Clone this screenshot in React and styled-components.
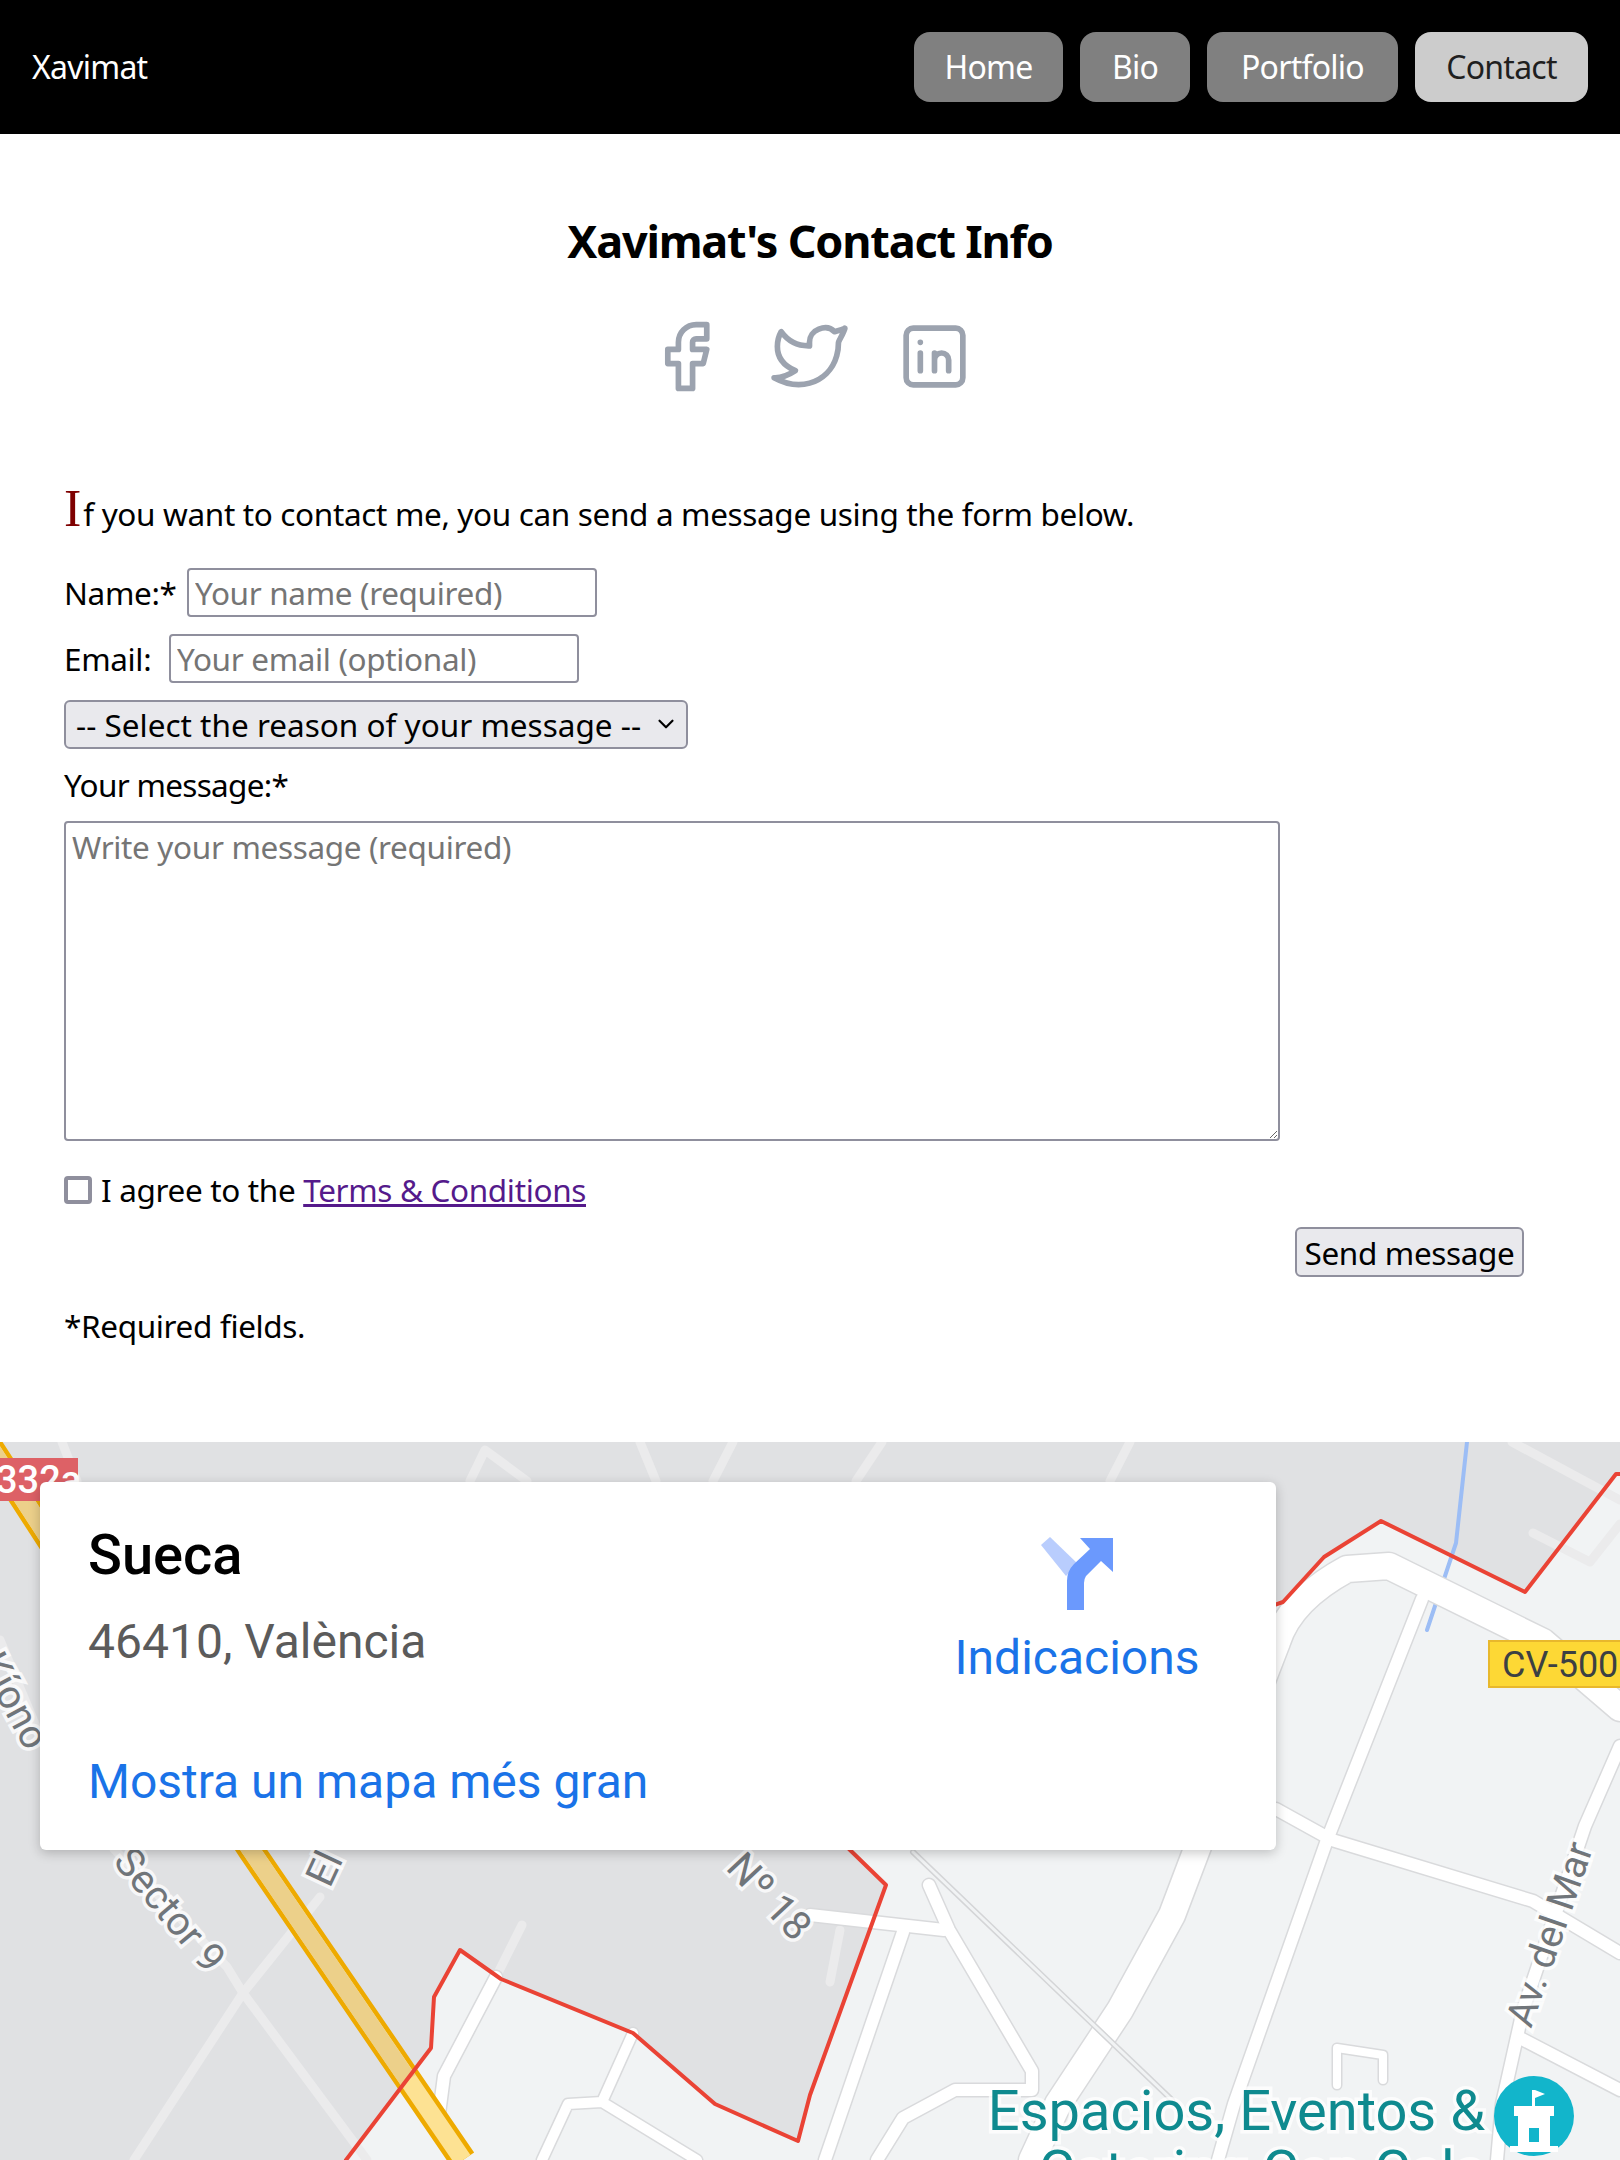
import React from "react";
import styled, { createGlobalStyle } from "styled-components";
import { TbBrandFacebook, TbBrandTwitter } from "react-icons/tb";
import { ChevronDown } from "lucide-react";

const GlobalStyle = createGlobalStyle`
  html, body {
    margin: 0;
    background: #fff;
  }
  body {
    font-family: "Noto Sans", "Open Sans", sans-serif;
    font-size: 31.5px;
    letter-spacing: -0.35px;
    color: #000;
  }
`;

const NavBar = styled.nav`
  display: flex;
  align-items: center;
  justify-content: space-between;
  height: 134px;
  padding: 0 32px;
  background: #000;
  font-size: 32px;
  letter-spacing: -0.75px;
`;

const Brand = styled.a`
  color: #fff;
  padding-bottom: 2px;
`;

const NavLinks = styled.div`
  display: flex;
  gap: 17px;
`;

const NavLink = styled.a`
  display: flex;
  align-items: center;
  box-sizing: border-box;
  justify-content: center;
  width: ${(p) => p.$width}px;
  height: 70px;
  padding-bottom: 2px;
  border-radius: 16px;
  color: ${(p) => (p.$active ? "#1f1f1f" : "#fff")};
  background: ${(p) => (p.$active ? "#cccccc" : "#808080")};
`;

const Content = styled.main`
  padding: 0 64px;
  height: 1308px;
  box-sizing: border-box;
  display: flow-root;
`;

const Title = styled.h1`
  margin: 77px 0 0;
  font-size: 45px;
  line-height: 60px;
  font-weight: 700;
  letter-spacing: -1.2px;
  text-align: center;
`;

const Socials = styled.div`
  display: flex;
  justify-content: center;
  align-items: center;
  gap: 39px;
  margin-top: 43px;
  color: #9ca3af;
`;

const LinkedinIcon = styled.svg`
  width: 87px;
  height: 85px;
  fill: none;
  stroke: currentColor;
  stroke-width: 1.6;
  stroke-linecap: round;
  stroke-linejoin: round;
`;

const Intro = styled.p`
  margin: 86px 0 0;
  line-height: 48px;
`;

const DropCap = styled.span`
  font-family: "Liberation Serif", serif;
  font-size: 52px;
  color: #7f0000;
  letter-spacing: 0;
  margin-right: 2px;
`;

const Row = styled.div`
  display: flex;
  align-items: center;
  margin-top: 17px;
  &:first-of-type {
    margin-top: 30px;
  }
`;

const FieldLabel = styled.label`
  width: ${(p) => p.$width}px;
`;

const TextInput = styled.input`
  box-sizing: border-box;
  width: 410px;
  height: 49px;
  padding: 0 6px;
  border: 2px solid #8f8f9d;
  border-radius: 4px;
  font: inherit;
  letter-spacing: inherit;
  &::placeholder {
    color: #757575;
    opacity: 1;
  }
`;

const SelectWrap = styled.div`
  position: relative;
  width: 624px;
  margin-top: 17px;
`;

const Select = styled.select`
  display: block;
  box-sizing: border-box;
  width: 100%;
  height: 49px;
  padding: 0 10px;
  border: 2px solid #8f8f9d;
  border-radius: 6px;
  background: #e9e9ed;
  color: #000;
  font: inherit;
  letter-spacing: 0;
  appearance: none;
`;

const SelectArrow = styled(ChevronDown)`
  position: absolute;
  right: 9px;
  top: 11px;
  pointer-events: none;
`;

const MessageLabel = styled.label`
  display: block;
  margin-top: 16px;
  line-height: 40px;
  letter-spacing: -0.7px;
`;

const MessageBox = styled.textarea`
  display: block;
  box-sizing: border-box;
  width: 1216px;
  height: 320px;
  margin-top: 16px;
  padding: 2px 6px;
  border: 2px solid #8f8f9d;
  border-radius: 4px;
  font: inherit;
  letter-spacing: inherit;
  &::placeholder {
    color: #757575;
    opacity: 1;
  }
`;

const AgreeRow = styled.label`
  display: flex;
  align-items: center;
  gap: 9px;
  margin-top: 29px;
  line-height: 40px;
`;

const CheckBox = styled.input`
  box-sizing: border-box;
  appearance: none;
  width: 28px;
  height: 28px;
  margin: 0;
  border: 4px solid #8f8f9d;
  border-radius: 4px;
  background: #fff;
`;

const TermsLink = styled.a`
  color: #551a8b;
  text-decoration: underline;
`;

const SendRow = styled.div`
  display: flex;
  justify-content: flex-end;
  padding-right: 32px;
  margin-top: 17px;
`;

const SendButton = styled.button`
  box-sizing: border-box;
  width: 229px;
  height: 50px;
  padding: 0;
  border: 2px solid #8f8f9d;
  border-radius: 6px;
  background: #e9e9ed;
  color: #000;
  font: inherit;
  letter-spacing: inherit;
`;

const Required = styled.p`
  margin: 29px 0 0;
  line-height: 40px;
`;

const MapSection = styled.section`
  position: relative;
  height: 718px;
  overflow: hidden;
  background: #e0e1e3;
`;

const MapCanvas = styled.svg`
  display: block;
  width: 1620px;
  height: 718px;
`;

const MapLabel = styled.text`
  font-family: Roboto, sans-serif;
  font-size: ${(p) => p.$size || 40}px;
  font-weight: 400;
  letter-spacing: 0;
  fill: ${(p) => p.$color || "#70757a"};
  stroke: #fff;
  stroke-width: 7px;
  stroke-opacity: 0.75;
  paint-order: stroke;
`;

const ShieldLabel = styled.text`
  font-family: Roboto, sans-serif;
  font-size: ${(p) => p.$size}px;
  font-weight: ${(p) => p.$weight || 400};
  letter-spacing: 0;
  fill: ${(p) => p.$color};
`;

const PlaceCard = styled.div`
  position: absolute;
  left: 40px;
  top: 40px;
  box-sizing: border-box;
  width: 1236px;
  height: 368px;
  padding: 40px 48px 0;
  border-radius: 6px;
  background: #fff;
  box-shadow: 0 3px 12px rgba(0, 0, 0, 0.22);
  font-family: Roboto, sans-serif;
  letter-spacing: 0;
`;

const CardTop = styled.div`
  display: flex;
  justify-content: space-between;
  height: 232px;
`;

const PlaceName = styled.div`
  font-size: 56px;
  line-height: 66px;
  font-weight: 500;
`;

const PlaceAddress = styled.div`
  margin-top: 26px;
  font-size: 48px;
  line-height: 56px;
  color: #5b5b5b;
`;

const Directions = styled.a`
  display: flex;
  flex-direction: column;
  align-items: center;
  width: 244px;
  margin: 15px 29px 0 0;
  color: #1a73e8;
  font-size: 48px;
  line-height: 56px;
`;

const DirectionsText = styled.span`
  margin-top: 20px;
`;

const BigMapLink = styled.a`
  display: block;
  color: #1a73e8;
  font-size: 48px;
  line-height: 56px;
`;

const roads = [
  { w: 26, d: "M1032 2160L1058 2104L1120 2010L1172 1915L1197 1849L1277 1642Q1290 1600 1347 1569L1389 1566L1543 1642L1620 1708" },
  { w: 12, d: "M1422 1599L1327 1840L1234 2104L1218 2160" },
  { w: 12, d: "M1276 1809L1332 1840L1533 1901L1620 1953" },
  { w: 12, d: "M1620 1746L1585 1826L1523 2010L1502 2104L1497 2160" },
  { w: 12, d: "M1520 2038L1620 2090" },
  { w: 12, d: "M929 1885L949 1930L1032 2071V2090H955L903 2118L877 2160" },
  { w: 12, d: "M810 1915L944 1930" },
  { w: 12, d: "M903 1932L825 2160" },
  { w: 8, d: "M1337 2048L1383 2055V2080M1337 2048V2085" },
  { w: 12, d: "M496 1977L444 2076L439 2114" },
  { w: 10, d: "M602 2102L633 2033M602 2102L568 2104L542 2160M602 2102L697 2160" },
];

const greyRoads = [
  "M522 1925L496 1977",
  "M320 1897L243 1993L134 2160",
  "M114 1849L227 1967L243 1993L367 2160",
  "M882 1442L856 1481",
  "M1130 1442L1110 1481",
  "M470 1481L485 1450L527 1481",
  "M656 1481L640 1442",
  "M733 1442L713 1481",
  "M62 1442L77 1481",
  "M830 1982L840 1930",
  "M0 1640L50 1760",
  "M1533 1533L1590 1562L1620 1524",
  "M1512 1442L1620 1500",
];

const redLine =
  "M346 2160L431 2048L434 1997L460 1950L501 1979L633 2033L715 2104L798 2141L810 2095L886 1885L849 1849L1000 1700L1283 1602L1324 1557L1381 1521L1525 1592L1616 1474H1620";

const lightArea = `${redLine}V2160Z`;

const MapDrawing = () => (
  <MapCanvas viewBox="0 1442 1620 718">
    <path d={lightArea} fill="#f1f3f4" />
    <g fill="none" strokeLinejoin="round" strokeLinecap="round">
      <path d="M1467 1442L1456 1543L1427 1630" stroke="#9cbdf5" strokeWidth="4" />
      {greyRoads.map((d) => (
        <path key={d} d={d} stroke="#ebebec" strokeWidth="9" />
      ))}
      {roads.map((r) => (
        <path key={r.d} d={r.d} stroke="#d9dadc" strokeWidth={r.w + 3} />
      ))}
      {roads.map((r) => (
        <path key={r.d} d={r.d} stroke="#fff" strokeWidth={r.w} />
      ))}
      <path d="M913 1852L1172 2100" stroke="#d4d5d7" strokeWidth="6" />
      <path d="M913 1852L1172 2100" stroke="#f1f3f4" strokeWidth="3" />
      <path d="M-20 1432L251 1850L463 2160" stroke="#eeaa00" strokeWidth="27" strokeLinecap="butt" />
      <path d="M-20 1432L251 1850L463 2160" stroke="#fde293" strokeWidth="18" strokeLinecap="butt" />
      <path d="M-20 1432L251 1850L408 2080" stroke="#ecd08a" strokeWidth="18" strokeLinecap="butt" />
      <path d={redLine} stroke="#ea4335" strokeWidth="4" />
    </g>
    <rect x="0" y="1458" width="78" height="43" fill="#dd6166" />
    <ShieldLabel x="-4" y="1493" $size={38} $color="#fff" $weight={500}>332a</ShieldLabel>
    <rect x="1489" y="1641" width="134" height="46" fill="#fdd835" stroke="#e8b82c" strokeWidth="2" />
    <ShieldLabel x="1502" y="1677" $size={36} $color="#3c4043">CV-500</ShieldLabel>
    <MapLabel x="0" y="0" transform="translate(112 1862) rotate(50)">Sector 9</MapLabel>
    <MapLabel x="-12" y="12" transform="translate(324 1873) rotate(-65)">El</MapLabel>
    <MapLabel x="-46" y="12" transform="translate(765 1894) rotate(47)">Nº 18</MapLabel>
    <MapLabel x="-90" y="12" $size={39} transform="translate(1549 1940) rotate(-71)">Av. del Mar</MapLabel>
    <MapLabel x="-50" y="12" transform="translate(12 1700) rotate(62)">Kíono</MapLabel>
    <MapLabel x="1485" y="2130" textAnchor="end" $size={56} $color="#0f8a8f">Espacios, Eventos &amp;</MapLabel>
    <MapLabel x="1485" y="2190" textAnchor="end" $size={56} $color="#0f8a8f">Catering Can Cala</MapLabel>
    <circle cx="1534" cy="2116" r="40" fill="#12b5cb" />
    <path d="M1518 2116h32v30h-32z M1510 2146h48v6h-48z M1514 2106h40v10h-40z M1532 2090h3v16h-3z M1535 2090l10 4l-10 4z" fill="#fff" />
    <rect x="1529" y="2128" width="10" height="14" fill="#12b5cb" />
  </MapCanvas>
);

const DirectionsIcon = () => (
  <svg width="73" height="73" viewBox="0 0 73 73">
    <path d="M0 8L9 0L37 27L25 39Z" fill="#b9cdfd" />
    <path d="M26 73V44Q26 34 33 27L49 12L39 1H72V35L60 24L45 39Q43 42 43 46V73Z" fill="#6b99fd" />
  </svg>
);

const App = () => (
  <>
    <GlobalStyle />
    <NavBar>
      <Brand>Xavimat</Brand>
      <NavLinks>
        <NavLink $width={149}>Home</NavLink>
        <NavLink $width={110}>Bio</NavLink>
        <NavLink $width={191}>Portfolio</NavLink>
        <NavLink $width={173} $active>Contact</NavLink>
      </NavLinks>
    </NavBar>
    <Content>
      <Title>Xavimat's Contact Info</Title>
      <Socials>
        <TbBrandFacebook size={85} strokeWidth={1.6} />
        <TbBrandTwitter size={85} strokeWidth={1.6} />
        <LinkedinIcon viewBox="0 0 24 24">
          <rect x="4" y="4" width="16" height="16" rx="2" />
          <path d="M8 11v5M8 8v.01M12 16v-5M16 16v-3a2 2 0 0 0-4 0" />
        </LinkedinIcon>
      </Socials>
      <Intro>
        <DropCap>I</DropCap>f you want to contact me, you can send a message using the form below.
      </Intro>
      <form>
        <Row>
          <FieldLabel $width={123}>Name:*</FieldLabel>
          <TextInput placeholder="Your name (required)" />
        </Row>
        <Row>
          <FieldLabel $width={105}>Email:</FieldLabel>
          <TextInput placeholder="Your email (optional)" />
        </Row>
        <SelectWrap>
          <Select>
            <option>-- Select the reason of your message --</option>
          </Select>
          <SelectArrow size={26} color="#000" />
        </SelectWrap>
        <MessageLabel>Your message:*</MessageLabel>
        <MessageBox placeholder="Write your message (required)" />
        <AgreeRow>
          <CheckBox type="checkbox" />
          <span>
            I agree to the <TermsLink>Terms &amp; Conditions</TermsLink>
          </span>
        </AgreeRow>
        <SendRow>
          <SendButton type="button">Send message</SendButton>
        </SendRow>
        <Required>*Required fields.</Required>
      </form>
    </Content>
    <MapSection>
      <MapDrawing />
      <PlaceCard>
        <CardTop>
          <div>
            <PlaceName>Sueca</PlaceName>
            <PlaceAddress>46410, València</PlaceAddress>
          </div>
          <Directions>
            <DirectionsIcon />
            <DirectionsText>Indicacions</DirectionsText>
          </Directions>
        </CardTop>
        <BigMapLink>Mostra un mapa més gran</BigMapLink>
      </PlaceCard>
    </MapSection>
  </>
);

export default App;
